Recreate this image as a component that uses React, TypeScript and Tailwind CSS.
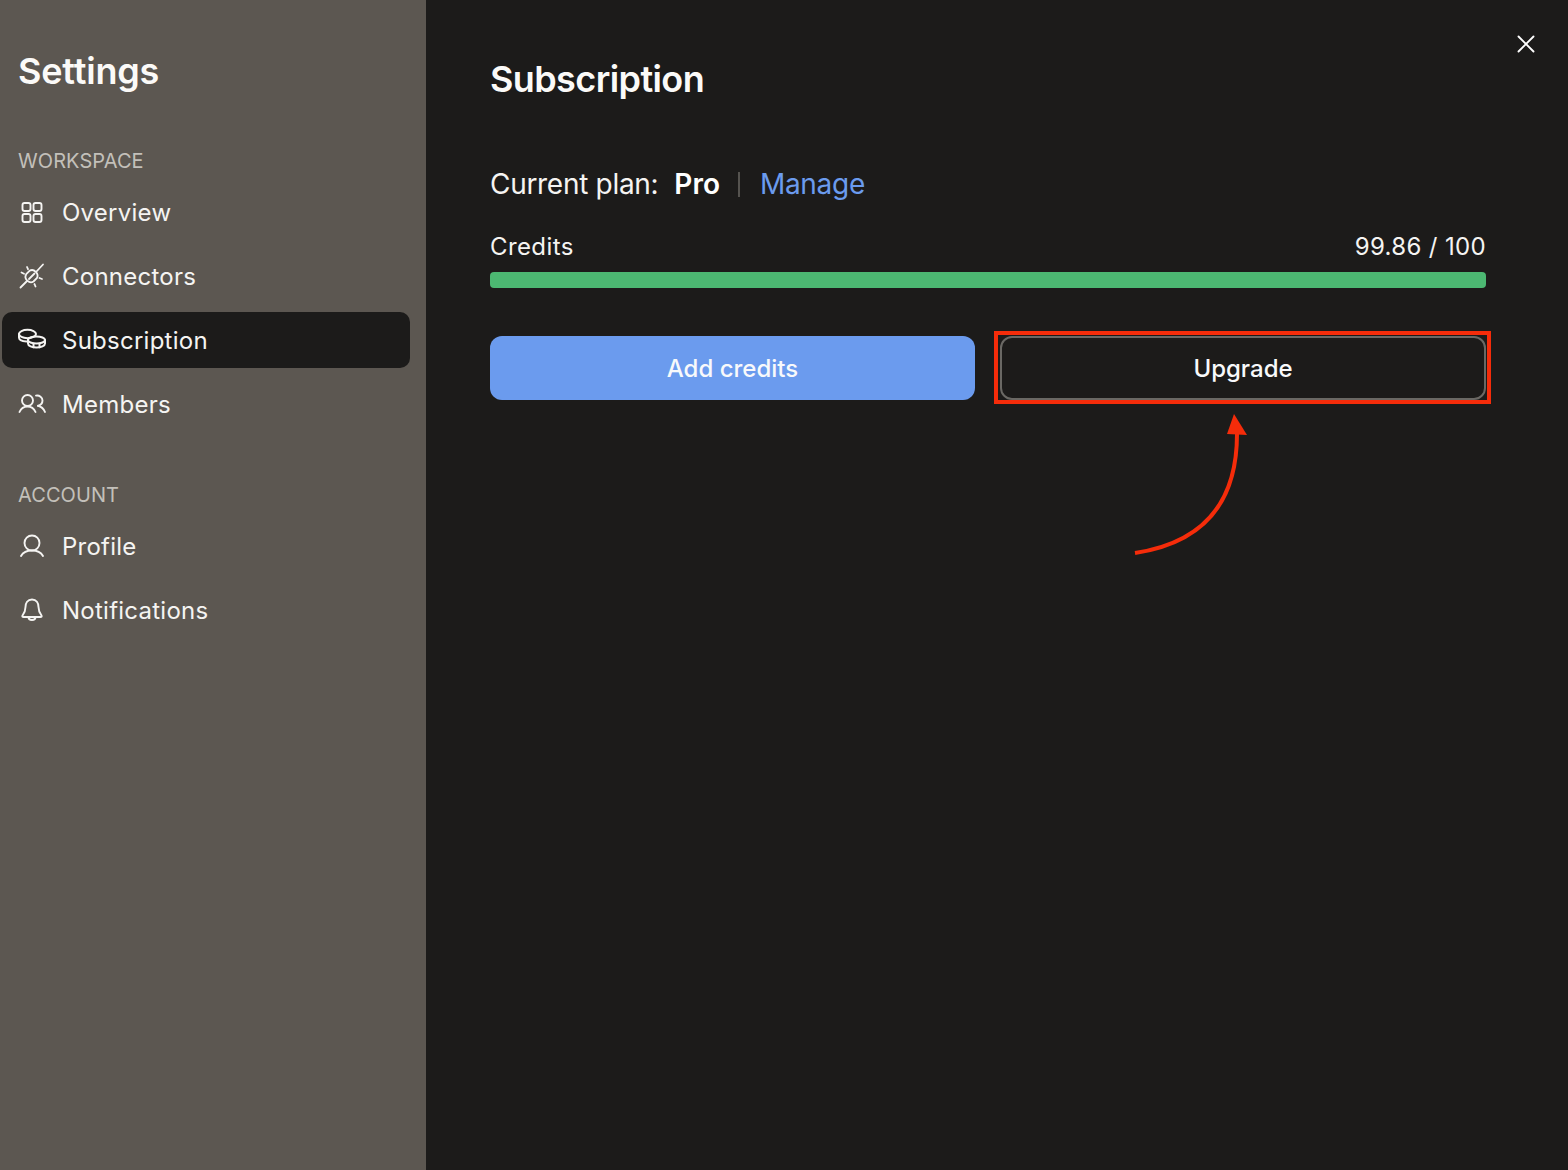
import { X } from 'lucide-react';
import type { ReactNode } from 'react';

const iconProps = {
  viewBox: '0 0 28 28',
  fill: 'none',
  stroke: 'currentColor',
  strokeWidth: 1.9,
  strokeLinecap: 'round' as const,
  strokeLinejoin: 'round' as const,
  className: 'h-7 w-7',
};

function GridIcon() {
  return (
    <svg {...iconProps}>
      <rect x="4.5" y="5" width="8" height="8" rx="2" />
      <rect x="15.5" y="5" width="8" height="8" rx="2" />
      <rect x="4.5" y="16" width="8" height="8" rx="2" />
      <rect x="15.5" y="16" width="8" height="8" rx="2" />
    </svg>
  );
}

function PlugIcon() {
  return (
    <svg {...iconProps} strokeWidth={1.8}>
      <path d="M2.5 25.5 L9 19" />
      <path d="M18.5 9.5 L25 2.5" />
      <path d="M11.5 8.8 C13.5 7.6 16 8 17.8 9.8 C19.6 11.6 20 14.2 18.8 16.2 L15.5 19.5 C13.5 20.8 11 20.2 9.2 18.6 C7.5 17 7 14.4 8.2 12.2 Z" />
      <path d="M11 17 L16.5 11.5" />
      <path d="M3.5 10.5 L6 11.8" />
      <path d="M9 5 L10 7.2" />
      <path d="M21.5 16 L24 17" />
      <path d="M16.5 22 L17.5 24.5" />
    </svg>
  );
}

function CoinsIcon() {
  return (
    <svg {...iconProps} strokeWidth={2}>
      <ellipse cx="9.5" cy="8" rx="8.5" ry="4.2" />
      <path d="M1 8 V11.5 C1 13.6 4 15.2 8.5 15.5" />
      <ellipse cx="18.5" cy="14" rx="8.5" ry="3.6" />
      <path d="M10 14 V17.5 C10 19.8 14 21.5 18.5 21.5 C23 21.5 27 19.8 27 17.5 V14" />
      <path d="M15.5 17.5 V21.3 M21.5 17.5 V21.3" />
    </svg>
  );
}

function MembersIcon() {
  return (
    <svg {...iconProps}>
      <circle cx="9.5" cy="10.5" r="5.5" />
      <path d="M1.5 22 C3 18.5 6 16.5 9.5 16.5 C13 16.5 16 18.5 17.5 22" />
      <path d="M18 5.6 C21.5 5 24.5 7.5 24.5 10.5 C24.5 13 22.8 15 20 15.8" />
      <path d="M20 15.8 C23 16.5 25.5 18.5 27 22" />
    </svg>
  );
}

function ProfileIcon() {
  return (
    <svg {...iconProps}>
      <circle cx="14" cy="11" r="7.5" />
      <path d="M3 24 C5 20.5 9 18.5 14 18.5 C19 18.5 23 20.5 25 24" />
    </svg>
  );
}

function BellIcon() {
  return (
    <svg {...iconProps}>
      <path d="M14 3.5 C9.5 3.5 7.5 7 7.5 11 C7.5 15 6 17.5 4.5 19.5 C4 20.5 4.5 21 5.5 21 H22.5 C23.5 21 24 20.5 23.5 19.5 C22 17.5 20.5 15 20.5 11 C20.5 7 18.5 3.5 14 3.5 Z" />
      <path d="M10.5 21 C10.5 25 17.5 25 17.5 21" />
    </svg>
  );
}

function NavItem({ icon, label, active }: { icon: ReactNode; label: string; active?: boolean }) {
  return (
    <div
      className={`flex h-14 items-center rounded-[10px] ${
        active ? 'bg-[#1c1b1a]' : ''
      }`}
    >
      <div className="flex w-[60px] shrink-0 justify-center text-[#f5f4f2]">{icon}</div>
      <span className="pt-[2px] text-[24px] leading-none tracking-[0.25px] text-[#f5f4f2]">{label}</span>
    </div>
  );
}

function SectionLabel({ children }: { children: ReactNode }) {
  return (
    <div className="pl-[16px] text-[20px] leading-[28px] tracking-[0.08px] text-[#c3c0ba]">
      {children}
    </div>
  );
}

export default function App() {
  return (
    <div
      className="flex h-[1170px] w-[1568px] overflow-hidden bg-[#1c1b1a] text-white"
      style={{ fontFamily: 'Inter, sans-serif' }}
    >
      <aside className="w-[426px] shrink-0 bg-[#5c5751] pr-4 pl-[2px]">
        <h2 className="mt-[48px] pl-[16px] text-[36px] leading-[46px] font-semibold tracking-[-0.2px] text-[#fbfaf8]">
          Settings
        </h2>
        <div className="mt-[53px]">
          <SectionLabel>WORKSPACE</SectionLabel>
        </div>
        <nav className="mt-[9px] flex flex-col gap-2">
          <NavItem icon={<GridIcon />} label="Overview" />
          <NavItem icon={<PlugIcon />} label="Connectors" />
          <NavItem icon={<CoinsIcon />} label="Subscription" active />
          <NavItem icon={<MembersIcon />} label="Members" />
        </nav>
        <div className="mt-[49px]">
          <SectionLabel>ACCOUNT</SectionLabel>
        </div>
        <nav className="mt-[9px] flex flex-col gap-2">
          <NavItem icon={<ProfileIcon />} label="Profile" />
          <NavItem icon={<BellIcon />} label="Notifications" />
        </nav>
      </aside>

      <main className="relative flex-1 pt-[56px] pr-[82px] pl-[64px]">
        <X size={30} strokeWidth={1.5} className="absolute top-[29px] right-[27px] text-white" />
        <h1 className="text-[36px] leading-[46px] font-semibold tracking-[-0.6px] text-[#fbfaf8]">Subscription</h1>

        <div className="mt-[64px] flex h-[36px] items-center text-[28px] text-[#f5f4f2]">
          <span className="tracking-[-0.3px]">Current plan:</span>
          <span className="ml-[16px] font-semibold text-white">Pro</span>
          <span className="mr-[20px] ml-[18px] h-[25px] w-[2px] bg-[#55534f]" />
          <span className="tracking-[-0.3px] text-[#6b9bee]">Manage</span>
        </div>

        <div className="mt-[29px] flex h-[32px] items-center justify-between text-[24px] text-[#f5f4f2]">
          <span className="tracking-[0.4px]">Credits</span>
          <span className="tracking-[0.35px]">99.86 / 100</span>
        </div>
        <div className="mt-[9px] h-4 rounded-[4px] bg-[#4cb872]" />

        <div className="mt-12 grid grid-cols-[485px_1fr] gap-[25px]">
          <button className="h-16 rounded-[12px] bg-[#6b9bee] pt-[2px] text-[24px] font-medium text-[#f8f9fb]">
            Add credits
          </button>
          <button className="h-16 rounded-[12px] border-2 border-[#6a6864] pt-[2px] text-[24px] font-medium text-[#f8f9fb]">
            Upgrade
          </button>
        </div>

        {/* annotation drawn over the button */}
        <div className="absolute top-[331px] left-[568px] h-[73px] w-[497px] border-[4px] border-[#f52c0a]" />
        <svg viewBox="0 0 120 150" className="absolute top-[412px] left-[702px] h-[150px] w-[120px]" fill="none">
          <path d="M7 141 C60 133 109 105 109 22" stroke="#f52c0a" strokeWidth="4" />
          <path d="M106 2 L119 23 L99 22 Z" fill="#f52c0a" />
        </svg>
      </main>
    </div>
  );
}
